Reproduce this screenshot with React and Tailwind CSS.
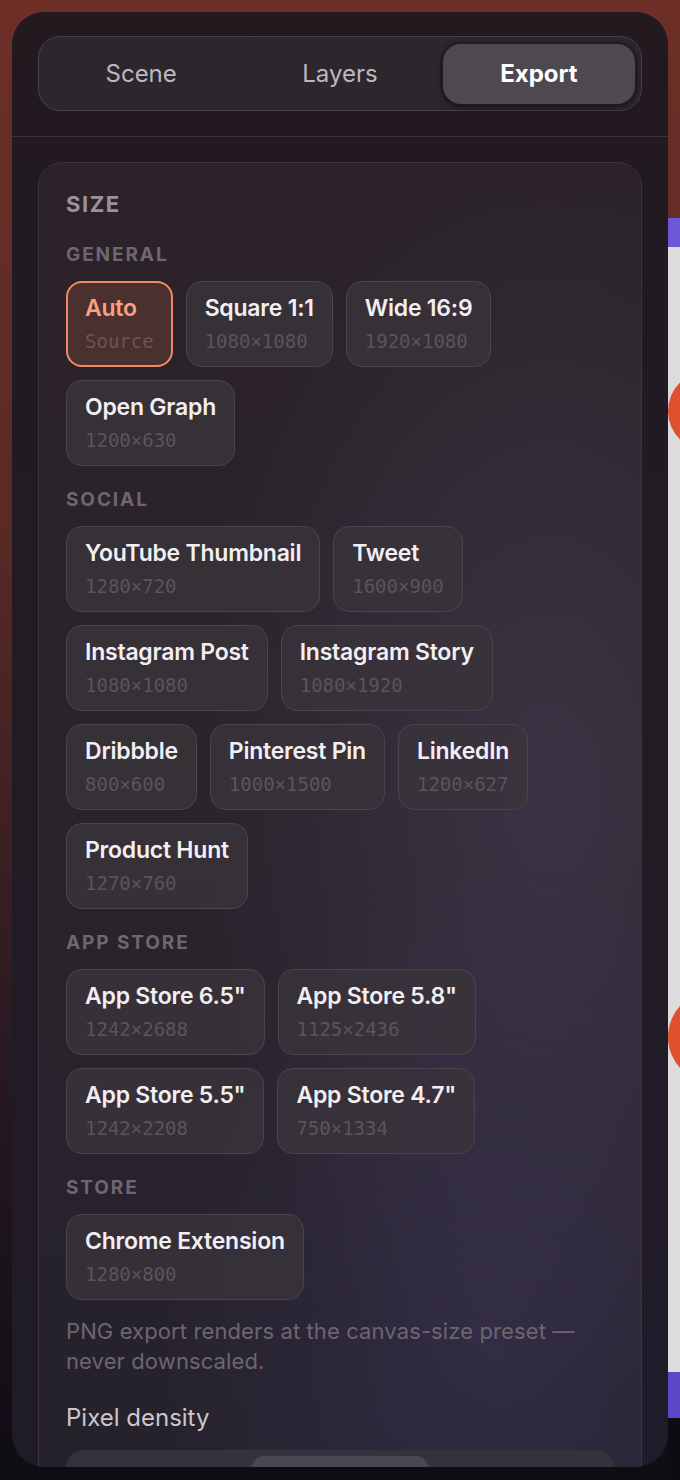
import React from "react";

const groups = [
  {
    label: "GENERAL",
    items: [
      { t: "Auto", s: "Source", active: true },
      { t: "Square 1:1", s: "1080×1080" },
      { t: "Wide 16:9", s: "1920×1080" },
      { t: "Open Graph", s: "1200×630" },
    ],
  },
  {
    label: "SOCIAL",
    items: [
      { t: "YouTube Thumbnail", s: "1280×720" },
      { t: "Tweet", s: "1600×900" },
      { t: "Instagram Post", s: "1080×1080" },
      { t: "Instagram Story", s: "1080×1920" },
      { t: "Dribbble", s: "800×600" },
      { t: "Pinterest Pin", s: "1000×1500" },
      { t: "LinkedIn", s: "1200×627" },
      { t: "Product Hunt", s: "1270×760" },
    ],
  },
  {
    label: "APP STORE",
    items: [
      { t: "App Store 6.5\"", s: "1242×2688" },
      { t: "App Store 5.8\"", s: "1125×2436" },
      { t: "App Store 5.5\"", s: "1242×2208" },
      { t: "App Store 4.7\"", s: "750×1334" },
    ],
  },
  {
    label: "STORE",
    items: [{ t: "Chrome Extension", s: "1280×800" }],
  },
];

const sans = "font-['Inter','Noto_Sans',sans-serif]";
const mono = "font-['DejaVu_Sans_Mono','Liberation_Mono',monospace]";

function Preset({ t, s, active }) {
  if (active) {
    return (
      <div className="flex flex-col rounded-[16px] border-2 border-[#ef8a61] bg-[#4a302e] px-[17px] pt-[11px] pb-[12px]">
        <div className="text-[23px] leading-[28px] font-semibold tracking-[-0.01em] text-[#f6a27f]">{t}</div>
        <div className={`${mono} mt-[7px] text-[19px] leading-[24px] text-[#6a5654]`}>{s}</div>
      </div>
    );
  }
  return (
    <div className="flex flex-col rounded-[16px] border border-[#4a444c] bg-[#39333b]/80 px-[18px] pt-[12px] pb-[13px]">
      <div className="text-[23px] leading-[28px] font-semibold tracking-[-0.01em] text-[#f2eef2]">{t}</div>
      <div className={`${mono} mt-[7px] text-[19px] leading-[24px] text-[#5a545e]`}>{s}</div>
    </div>
  );
}

export default function App() {
  return (
    <div
      className={`${sans} flex items-start w-[680px] h-[1480px] overflow-hidden bg-[linear-gradient(180deg,#6d2f26_0%,#5a2a26_35%,#2a1a22_70%,#0f0c13_100%)]`}
    >
      {/* Panel */}
      <div className="mt-[12px] ml-[12px] flex h-[1455px] w-[656px] shrink-0 flex-col overflow-hidden rounded-[32px] bg-[linear-gradient(180deg,#231a20_0%,#221b24_50%,#1f1b29_100%)]">
        {/* Tabs */}
        <div className="border-b border-[#3a3239] px-[26px] pt-[24px] pb-[25px]">
          <div className="grid grid-cols-3 gap-[6.5px] rounded-[22px] border border-[#48414a] bg-[#2d272d] px-[6px] pt-[7px] pb-[6px]">
            <div className="flex h-[60px] items-center justify-center text-[24px] text-[#bfb7bf]">Scene</div>
            <div className="flex h-[60px] items-center justify-center text-[24px] text-[#bfb7bf]">Layers</div>
            <div className="flex h-[60px] items-center justify-center rounded-[18px] bg-[#4e494f] text-[24px] font-bold text-white shadow-[0_0_0_3px_rgba(20,16,20,0.35),0_4px_10px_rgba(0,0,0,0.35)]">
              Export
            </div>
          </div>
        </div>

        {/* Body */}
        <div className="px-[26px] pt-[25px]">
          <div className="rounded-[24px] border border-[#3b343d] bg-[radial-gradient(ellipse_60%_45%_at_85%_45%,rgba(80,72,100,0.45),transparent),radial-gradient(ellipse_55%_35%_at_75%_85%,rgba(70,60,110,0.35),transparent),linear-gradient(180deg,#2c2329_0%,#29232b_50%,#25222d_100%)] px-[27px] pt-[27px] pb-[40px]">
            <div className="text-[22px] leading-[28px] font-bold tracking-[0.07em] text-[#9b929b]">SIZE</div>

            {groups.map((g, gi) => (
              <div key={g.label} className={gi === 0 ? "mt-[25px]" : "mt-[22px]"}>
                <div className="text-[19px] leading-[24px] font-bold tracking-[0.1em] text-[#6e6671]">{g.label}</div>
                <div className="mt-[14px] flex flex-wrap gap-[13px]">
                  {g.items.map((it) => (
                    <Preset key={it.t} {...it} />
                  ))}
                </div>
              </div>
            ))}

            <p className="mt-[16px] text-[22px] leading-[30px] tracking-[0.005em] text-[#6d6670]">
              PNG export renders at the canvas-size preset —
              <br />
              never downscaled.
            </p>

            <div className="mt-[26px] text-[24px] leading-[32px] text-[#cdc6cc]">Pixel density</div>

            <div className="mt-[16px] grid grid-cols-3 rounded-[18px] bg-[#36323d] p-[6px]">
              <div className="h-[52px]" />
              <div className="h-[52px] rounded-[14px] bg-[#4b4752]" />
              <div className="h-[52px]" />
            </div>
          </div>
        </div>
      </div>

      {/* Canvas preview behind the panel (right edge) */}
      <div className="flex h-[1480px] flex-1 flex-col overflow-hidden pt-[218px]">
        <div className="h-[29px] bg-[#6a58d8]" />
        <div className="flex flex-1 flex-col bg-[#dcdcdc] pt-[124px]">
          <div className="h-[80px] w-[80px] shrink-0 rounded-full bg-[#e0502c]" />
          <div className="mt-[540px] h-[92px] w-[92px] shrink-0 rounded-full bg-[#e0502c]" />
        </div>
        <div className="h-[46px] bg-[#5b48c9]" />
        <div className="h-[62px] bg-[#0e0c13]" />
      </div>
    </div>
  );
}
